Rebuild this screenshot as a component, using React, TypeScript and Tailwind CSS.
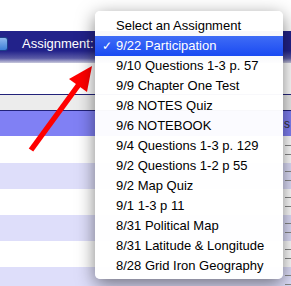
import React from "react";

const items = [
  "Select an Assignment",
  "9/22 Participation",
  "9/10 Questions 1-3 p. 57",
  "9/9 Chapter One Test",
  "9/8 NOTES Quiz",
  "9/6 NOTEBOOK",
  "9/4 Questions 1-3 p. 129",
  "9/2 Questions 1-2 p 55",
  "9/2 Map Quiz",
  "9/1 1-3 p 11",
  "8/31 Political Map",
  "8/31 Latitude & Longitude",
  "8/28 Grid Iron Geography",
];

export default function App() {
  const rows = ["bg-white h-[27px]", "bg-[#dedefa] h-[26px]", "bg-white h-[26px]", "bg-[#dedefa] h-[26px]", "bg-white h-[26px]", "bg-[#dedefa] h-[26px]"];
  return (
    <div
      className="relative w-[291px] h-[286px] overflow-hidden bg-white text-[13px]"
      style={{ fontFamily: '"Liberation Sans", Arial, sans-serif' }}
    >
      <div className="h-[31px] bg-white" />
      <div className="h-[32px] flex items-center bg-[linear-gradient(#22228a_0%,#22228a_62%,#5a5aa6_85%,#c8c8dc_100%)]">
        <div className="w-[8px] h-[14px] -mt-[6px] rounded-r-[3px] bg-[linear-gradient(#8fb8ee,#3d7fd8)] border border-[#1c3f8a] border-l-0" />
        <span className="ml-[14px] -mt-[6px] text-white">Assignment:</span>
      </div>
      <div className="h-[31px] bg-white" />
      <div className="h-px bg-[#22227a]" />
      <div className="h-[15px] bg-[#ececec]" />
      <div className="h-px bg-[#22227a]" />
      <div className="h-[25px] bg-[#8080f4] flex justify-end items-center pr-[1px]">
        <span className="text-[#333] text-[12px]">s</span>
      </div>
      {rows.map((r, i) => (
        <div key={i} className={`${r} flex justify-end`}>
          <div className="w-[6px] h-full flex flex-col justify-center gap-[8px]">
            <div className="h-px bg-[#888]" />
            <div className="h-px bg-[#888]" />
          </div>
        </div>
      ))}

      <svg className="absolute left-0 top-0 pointer-events-none" width="291" height="286">
        <line x1="31" y1="150" x2="80" y2="83" stroke="#ff0000" strokeWidth="5.5" />
        <polygon points="92,66 69,79 87,92" fill="#ff0000" />
      </svg>

      <div className="absolute left-[95px] top-[11px] w-[188px] h-[268px] rounded-[5px] bg-white/[0.97] shadow-[0_5px_18px_rgba(0,0,0,0.5)] pt-[5px]">
        {items.map((t, i) => (
          <div
            key={i}
            className={
              i === 1
                ? "relative h-[20px] leading-[20px] pl-[21px] text-white bg-[linear-gradient(#3f6cf6,#1a4af2)]"
                : "relative h-[20px] leading-[20px] pl-[21px] text-black"
            }
          >
            {i === 1 && <span className="absolute left-[7px] top-0 text-[12px]">✓</span>}
            {t}
          </div>
        ))}
      </div>
    </div>
  );
}
